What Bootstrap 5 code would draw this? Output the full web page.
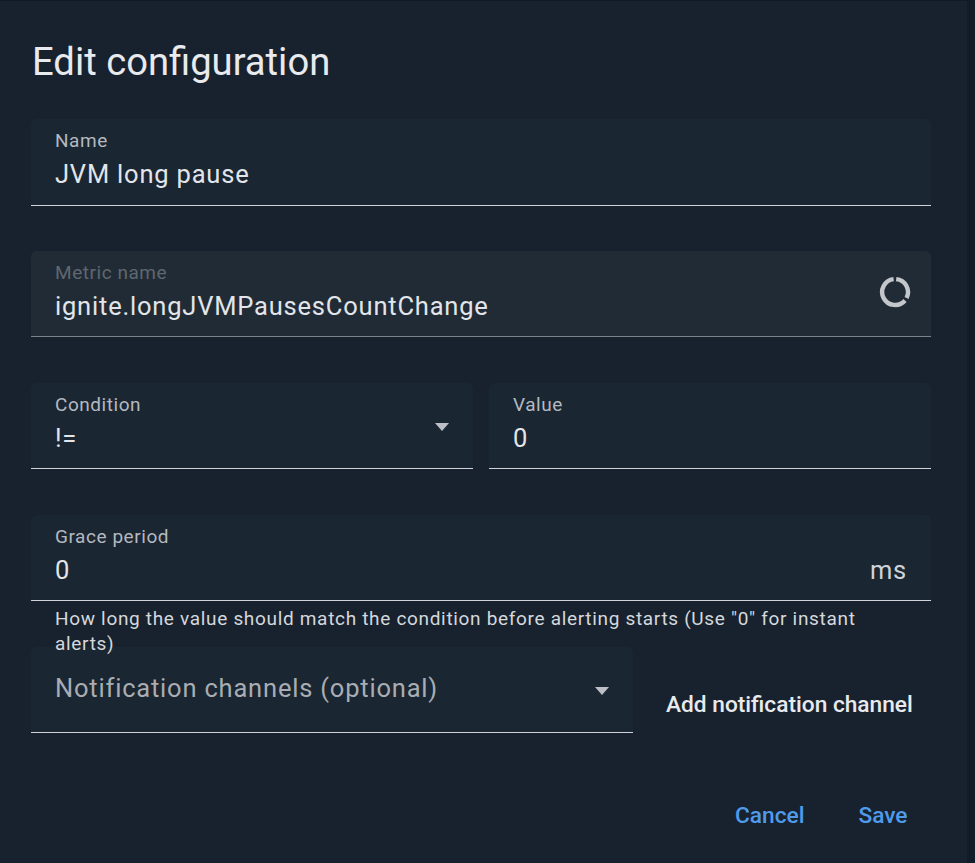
<!DOCTYPE html>
<html lang="en">
<head>
<meta charset="utf-8">
<title>Edit configuration</title>
<link href="https://cdn.jsdelivr.net/npm/bootstrap@5.3.0/dist/css/bootstrap.min.css" rel="stylesheet">
<style>
html,body{height:100%;margin:0}
body{background:#121c29;font-family:Roboto,sans-serif;overflow:hidden}
.dlg{width:967px;height:863px;background:#18222e;border-top:1px solid #0e1a2a;padding:0 36px 0 31px;color:#e6e9ee}
.dlg-title{font-size:38.2px;font-weight:400;line-height:42px;letter-spacing:0;margin:40px 0 36px 1px;color:#e8eaee}
.fld{background:#1a2632;border-radius:6px 6px 0 0;border-bottom:1px solid #d0d3d8;height:86.5px;padding:10px 24px 0;position:relative}
.fld-off{background:#212b35;border-bottom-color:#7d838b}
.fld-gap{margin-bottom:45.4px}
.fld-lab{font-size:19px;line-height:24px;letter-spacing:.55px;color:#b4b9c0;margin-bottom:5px}
.fld-off .fld-lab{color:#5f6770}
.fld-val{font-size:25.5px;line-height:32px;letter-spacing:.8px;color:#e2e5e9}
.caret-a{position:absolute;right:24px;top:40px;width:0;height:0;border-left:7.5px solid transparent;border-right:7.5px solid transparent;border-top:8px solid #bcc0c6}
.unit{font-size:25.5px;line-height:32px;letter-spacing:.8px;color:#cfd3d8}
.hint{font-size:19px;line-height:25px;letter-spacing:.68px;color:#d5d8dc;padding:5px 24px 0;height:45.5px;position:relative;z-index:1}
.notif{width:602px;flex:none;padding-top:25.5px}
.ph{font-size:25.5px;line-height:32px;letter-spacing:.8px;color:#a9adb2}
.add-link{font-size:22.7px;font-weight:500;color:#e8eaee;padding:0;margin:30px 18px 0 33px;white-space:nowrap}
.act{font-size:22.7px;font-weight:500;color:#4f9bea}
</style>
</head>
<body>
<div class="dlg">
  <h2 class="dlg-title">Edit configuration</h2>
  <div class="fld fld-gap">
    <div class="fld-lab">Name</div>
    <div class="fld-val">JVM long pause</div>
  </div>
  <div class="fld fld-off fld-gap">
    <div class="fld-lab">Metric name</div>
    <div class="fld-val">ignite.longJVMPausesCountChange</div>
    <svg class="position-absolute" style="right:20px;top:25px" width="32" height="32" viewBox="0 0 32 32" fill="none" stroke="#c3c7cb" stroke-width="4.4"><path d="M17.2 3.1A13 13 0 0 1 27.6 21.9"/><path d="M26 24.5A13 13 0 1 1 14.6 3.1"/></svg>
  </div>
  <div class="d-flex gap-3 fld-gap">
    <div class="fld flex-fill w-50">
      <div class="fld-lab">Condition</div>
      <div class="fld-val">!=</div>
      <span class="caret-a"></span>
    </div>
    <div class="fld flex-fill w-50">
      <div class="fld-lab">Value</div>
      <div class="fld-val">0</div>
    </div>
  </div>
  <div class="fld">
    <div class="fld-lab">Grace period</div>
    <div class="d-flex justify-content-between">
      <div class="fld-val">0</div>
      <div class="unit">ms</div>
    </div>
  </div>
  <div class="hint">How long the value should match the condition before alerting starts (Use "0" for instant alerts)</div>
  <div class="d-flex align-items-center">
    <div class="fld notif">
      <div class="ph">Notification channels (optional)</div>
      <span class="caret-a"></span>
    </div>
    <button type="button" class="btn add-link border-0">Add notification channel</button>
  </div>
  <div class="d-flex justify-content-end" style="gap:54px;margin-top:66px;padding-right:23.5px">
    <button type="button" class="btn act border-0 p-0">Cancel</button>
    <button type="button" class="btn act border-0 p-0">Save</button>
  </div>
</div>
<script src="https://cdn.jsdelivr.net/npm/bootstrap@5.3.0/dist/js/bootstrap.bundle.min.js"></script>
</body>
</html>
